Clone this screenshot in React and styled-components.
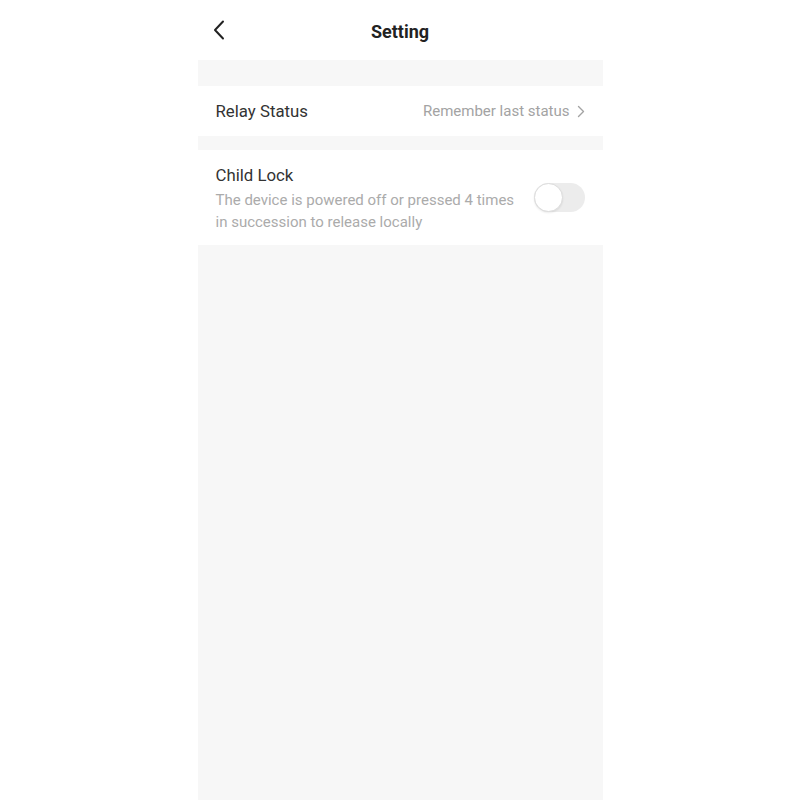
import React from "react";
import styled, { createGlobalStyle } from "styled-components";

const Global = createGlobalStyle`
  html, body { margin: 0; padding: 0; background: #ffffff; }
  body { font-family: Roboto, "Noto Sans", Arial, sans-serif; }
`;

const Phone = styled.div`
  width: 405px;
  margin: 0 auto;
  min-height: 800px;
  background: #f7f7f7;
  display: flex;
  flex-direction: column;
`;

const Header = styled.header`
  height: 60px;
  background: #ffffff;
  display: grid;
  grid-template-columns: 60px 1fr 60px;
  align-items: center;
`;

const BackButton = styled.button`
  border: 0;
  background: none;
  padding: 0 0 0 15px;
  height: 100%;
  display: flex;
  align-items: center;
  cursor: pointer;
`;

const Title = styled.h1`
  margin: 0;
  text-align: center;
  font-size: 18px;
  font-weight: 700;
  color: #222;
  padding-top: 2px;
`;

const Section = styled.section`
  background: #ffffff;
  margin-top: ${(p) => p.$gap}px;
`;

const Row = styled.div`
  display: flex;
  align-items: center;
  justify-content: space-between;
  padding: 0 18px;
  height: ${(p) => p.$height}px;
  gap: 16px;
`;

const Label = styled.div`
  font-size: 16.8px;
  color: #333;
`;

const Value = styled.div`
  display: flex;
  align-items: center;
  gap: 7px;
  font-size: 15px;
  color: #a3a3a3;
`;

const TextCol = styled.div`
  display: flex;
  flex-direction: column;
  gap: 4px;
  width: 315px;
  padding-top: 3px;
`;

const Desc = styled.div`
  font-size: 15px;
  line-height: 22px;
  color: #ababab;
`;

const Toggle = styled.div`
  width: 51px;
  height: 29px;
  border-radius: 15px;
  background: #ececec;
  position: relative;
  flex-shrink: 0;
`;

const Knob = styled.div`
  position: absolute;
  left: 0;
  top: 0;
  width: 27px;
  height: 27px;
  border-radius: 50%;
  background: #ffffff;
  border: 1px solid #dcdcdc;
  box-shadow: 0 1px 2px rgba(0,0,0,0.08);
`;

export default function App() {
  return (
    <>
      <Global />
      <Phone>
        <Header>
          <BackButton aria-label="back">
            <svg width="12" height="20" viewBox="0 0 12 20" fill="none">
              <path d="M10 1.5 L2 10 L10 18.5" stroke="#222" strokeWidth="2" strokeLinecap="round" strokeLinejoin="round" />
            </svg>
          </BackButton>
          <Title>Setting</Title>
          <div />
        </Header>
        <Section $gap={26}>
          <Row $height={50}>
            <Label>Relay Status</Label>
            <Value>
              Remember last status
              <svg width="8" height="13" viewBox="0 0 8 13" fill="none">
                <path d="M1.5 1.5 L6.5 6.5 L1.5 11.5" stroke="#a3a3a3" strokeWidth="1.4" strokeLinecap="round" strokeLinejoin="round" />
              </svg>
            </Value>
          </Row>
        </Section>
        <Section $gap={14}>
          <Row $height={95}>
            <TextCol>
              <Label>Child Lock</Label>
              <Desc>
                The device is powered off or pressed 4 times
                <br />
                in succession to release locally
              </Desc>
            </TextCol>
            <Toggle>
              <Knob />
            </Toggle>
          </Row>
        </Section>
      </Phone>
    </>
  );
}
